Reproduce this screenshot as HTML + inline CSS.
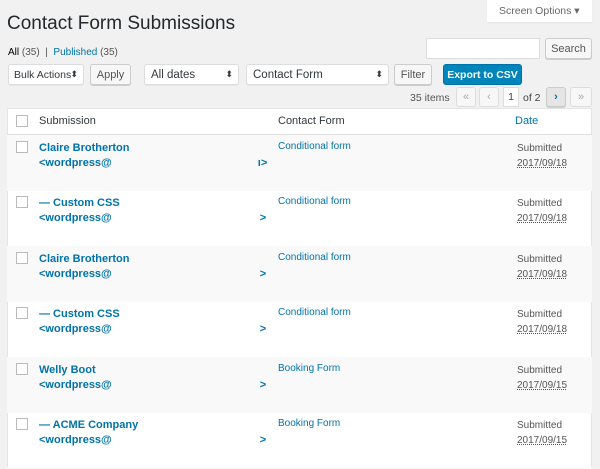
<!DOCTYPE html>
<html><head><meta charset="utf-8"><style>
*{box-sizing:border-box;margin:0;padding:0}
html,body{width:600px;height:469px;overflow:hidden}
body{background:#f1f1f1;font-family:"Liberation Sans",sans-serif;font-size:11px;color:#444;position:relative}
.a{position:absolute;white-space:nowrap}
.btn{position:absolute;background:#f7f7f7;border:1px solid #ccc;border-radius:3px;color:#555;font-size:11px;text-align:center;box-shadow:0 1px 0 #ccc;white-space:nowrap}
.sel{position:absolute;background:#fff;border:1px solid #ddd;border-radius:3px;color:#32373c;font-size:11.5px;padding:4px 6px;box-shadow:0 1px 1px rgba(0,0,0,.05);white-space:nowrap;overflow:hidden}
.sel:after{content:"⬍";position:absolute;right:5px;top:4px;font-size:9px}
.cb{position:absolute;width:12px;height:12px;border:1px solid #bbb;background:#fff;left:16px}
.link{color:#0073aa}
.row{position:absolute;left:7px;width:585px;height:56px}
.name{position:absolute;left:32px;top:6px;color:#0073aa;font-weight:bold;font-size:11px;line-height:15px;white-space:nowrap}
.form{position:absolute;left:271px;top:6px;color:#0073aa;font-size:10px}
.date{position:absolute;left:510px;top:6px;font-size:10px;line-height:15px;color:#555}
.date u{text-decoration:underline dotted}
</style></head><body>
<div class="a" style="left:487px;top:0;width:105px;height:22px;background:#fff;box-shadow:0 1px 1px rgba(0,0,0,.05);font-size:10.5px;color:#666;padding:5px 0 0 12px">Screen Options ▾</div>
<div class="a" style="left:7px;top:13px;font-size:19px;color:#23282d">Contact Form Submissions</div>
<div class="a" style="left:8px;top:47px;font-size:10px;color:#555"><span style="color:#000">All</span> (35) &nbsp;|&nbsp; <span class="link">Published</span> (35)</div>
<div class="a" style="left:426px;top:38px;width:114px;height:21px;background:#fff;border:1px solid #ddd"></div>
<div class="btn" style="left:545px;top:38px;width:47px;height:21px;padding-top:4px">Search</div>
<div class="sel" style="left:8px;top:64px;width:76px;height:21px;padding-left:5px;font-size:10.5px">Bulk Actions</div>
<div class="btn" style="left:90px;top:64px;width:41px;height:21px;padding-top:4px">Apply</div>
<div class="sel" style="left:144px;top:64px;width:95px;height:21px">All dates</div>
<div class="sel" style="left:246px;top:64px;width:143px;height:21px">Contact Form</div>
<div class="btn" style="left:394px;top:64px;width:38px;height:21px;padding-top:4px">Filter</div>
<div class="a" style="left:443px;top:64px;width:79px;height:21px;background:#0085ba;border:1px solid #0073aa;border-radius:3px;color:#fff;font-weight:bold;font-size:10.5px;text-align:center;padding-top:4px">Export to CSV</div>
<div class="a" style="left:410px;top:92px;font-size:10.5px;color:#555">35 items</div>
<div class="btn" style="left:456px;top:87px;width:20px;height:20px;color:#aaa;padding-top:3px;box-shadow:none;border-color:#ddd">«</div>
<div class="btn" style="left:479px;top:87px;width:20px;height:20px;color:#aaa;padding-top:3px;box-shadow:none;border-color:#ddd">‹</div>
<div class="a" style="left:503px;top:87px;width:16px;height:20px;background:#fff;border:1px solid #ddd;font-size:10.5px;text-align:center;padding-top:3px">1</div>
<div class="a" style="left:523px;top:92px;font-size:10.5px">of 2</div>
<div class="btn" style="left:546px;top:87px;width:20px;height:20px;background:#e5e5e5;color:#0073aa;padding-top:3px;font-weight:bold">›</div>
<div class="btn" style="left:570px;top:87px;width:22px;height:20px;color:#aaa;padding-top:3px;box-shadow:none;border-color:#ddd;background:#f7f7f7">»</div>
<div class="a" style="left:7px;top:108px;width:585px;height:361px;background:#fff;border:1px solid #e5e5e5"></div>
<div class="a" style="left:7px;top:108px;width:585px;height:27px;border-bottom:1px solid #e1e1e1"></div>
<div class="cb" style="top:115px"></div>
<div class="a" style="left:39px;top:115px;font-size:11px;color:#32373c">Submission</div>
<div class="a" style="left:278px;top:115px;font-size:11px;color:#32373c">Contact Form</div>
<div class="a link" style="left:515px;top:115px;font-size:11px">Date</div>

<div class="row" style="top:135px;background:#f9f9f9"><div class="cb" style="left:9px;top:6px"></div><div class="name">Claire Brotherton<br>&lt;wordpress@<span style="margin-left:146px">ı&gt;</span></div><div class="form">Conditional form</div><div class="date">Submitted<br><u>2017/09/18</u></div></div>
<div class="row" style="top:190px"><div class="cb" style="left:9px;top:6px"></div><div class="name">— Custom CSS<br>&lt;wordpress@<span style="margin-left:148px">&gt;</span></div><div class="form">Conditional form</div><div class="date">Submitted<br><u>2017/09/18</u></div></div>
<div class="row" style="top:246px;background:#f9f9f9"><div class="cb" style="left:9px;top:6px"></div><div class="name">Claire Brotherton<br>&lt;wordpress@<span style="margin-left:148px">&gt;</span></div><div class="form">Conditional form</div><div class="date">Submitted<br><u>2017/09/18</u></div></div>
<div class="row" style="top:301px"><div class="cb" style="left:9px;top:6px"></div><div class="name">— Custom CSS<br>&lt;wordpress@<span style="margin-left:148px">&gt;</span></div><div class="form">Conditional form</div><div class="date">Submitted<br><u>2017/09/18</u></div></div>
<div class="row" style="top:357px;background:#f9f9f9"><div class="cb" style="left:9px;top:6px"></div><div class="name">Welly Boot<br>&lt;wordpress@<span style="margin-left:148px">&gt;</span></div><div class="form">Booking Form</div><div class="date">Submitted<br><u>2017/09/15</u></div></div>
<div class="row" style="top:412px"><div class="cb" style="left:9px;top:6px"></div><div class="name">— ACME Company<br>&lt;wordpress@<span style="margin-left:148px">&gt;</span></div><div class="form">Booking Form</div><div class="date">Submitted<br><u>2017/09/15</u></div></div>
<div class="row" style="top:467px;height:2px;background:#f9f9f9"></div>
</body></html>
